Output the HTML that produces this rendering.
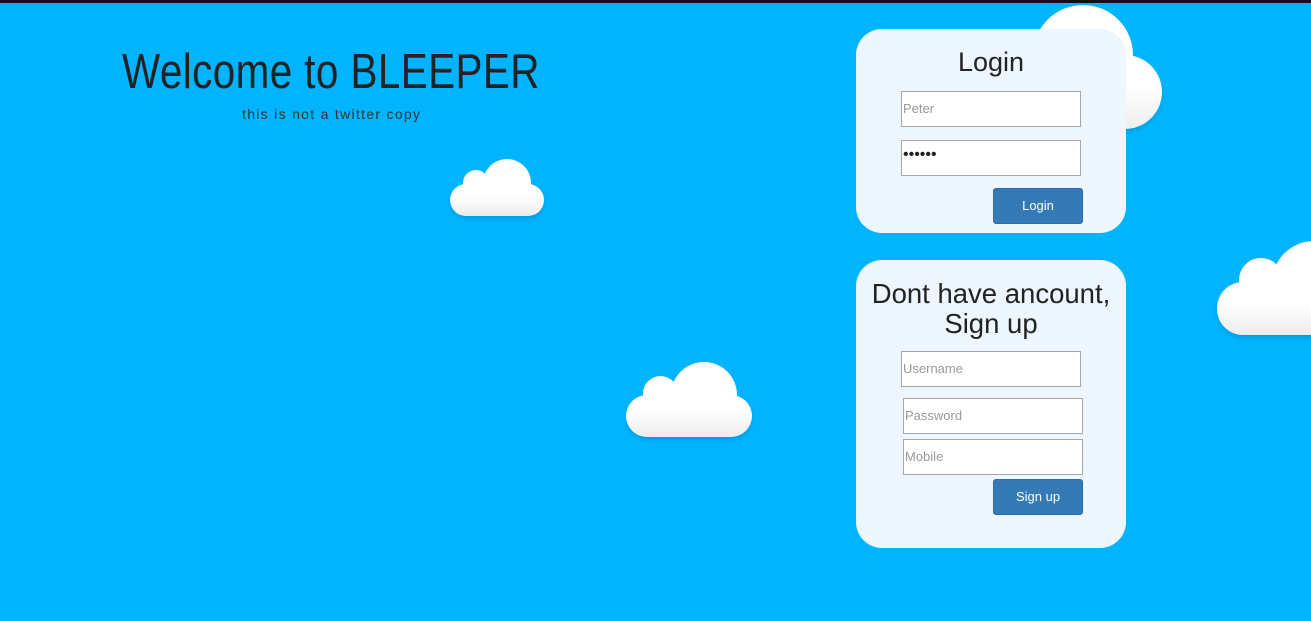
<!DOCTYPE html>
<html><head><style>
body{margin:0;width:1311px;height:621px;background:#00b4ff;overflow:hidden;position:relative;font-family:"Liberation Sans",sans-serif;}
.top{position:absolute;left:0;top:0;width:100%;height:3px;background:#111;}
.c{position:absolute;background:linear-gradient(#fff 40%,#ececec);box-shadow:0 3px 4px rgba(0,0,0,.12);}
.r{border-radius:50%;background:#fff;box-shadow:none;}
.card{position:absolute;left:856px;width:270px;background:#eef7ff;border-radius:26px;}
h1{position:absolute;left:122px;top:44px;margin:0;font-weight:normal;font-size:49px;color:#222;letter-spacing:0.5px;white-space:nowrap;transform-origin:left;transform:scaleX(0.825);}
.sub{position:absolute;left:242px;top:106px;font-size:14px;color:#333;letter-spacing:1.3px;}
.h{position:absolute;width:100%;text-align:center;color:#222;font-size:27px;}
.in{position:absolute;width:178px;height:34px;background:#fff;border:1px solid #a6a6a6;font-size:13px;color:#999;line-height:34px;padding-left:1px;box-sizing:border-box;width:180px;height:36px;}
.btn{position:absolute;width:88px;height:34px;background:#337ab7;border:1px solid #2e6da4;border-radius:3px;color:#fff;text-align:center;line-height:34px;font-size:13px;}
</style></head><body>
<div class="top"></div>
<div class="c r" style="left:1033px;top:5px;width:100px;height:100px;"></div>
<div class="c r" style="left:1088px;top:55px;width:74px;height:74px;background:linear-gradient(#fff 40%,#eee);box-shadow:0 3px 4px rgba(0,0,0,.12)"></div>
<div class="c r" style="left:463px;top:170px;width:26px;height:26px;"></div>
<div class="c r" style="left:483px;top:159px;width:48px;height:48px;"></div>
<div class="c" style="left:450px;top:184px;width:94px;height:32px;border-radius:16px;"></div>
<div class="c r" style="left:643px;top:376px;width:35px;height:35px;"></div>
<div class="c r" style="left:671px;top:362px;width:66px;height:66px;"></div>
<div class="c" style="left:626px;top:395px;width:126px;height:42px;border-radius:21px;"></div>
<div class="c r" style="left:1239px;top:258px;width:44px;height:44px;"></div>
<div class="c r" style="left:1272px;top:241px;width:84px;height:84px;"></div>
<div class="c" style="left:1217px;top:282px;width:140px;height:53px;border-radius:26px;"></div>

<h1>Welcome to BLEEPER</h1>
<div class="sub">this is not a twitter copy</div>

<div class="card" style="top:29px;height:204px;">
  <div class="h" style="top:18px;">Login</div>
  <div class="in" style="left:45px;top:62px;">Peter</div>
  <div class="in" style="left:45px;top:111px;color:#222;font-size:16px;line-height:28px;">••••••</div>
  <div class="btn" style="left:137px;top:159px;">Login</div>
</div>
<div class="card" style="top:260px;height:288px;">
  <div class="h" style="top:19px;line-height:30px;font-size:27.5px;">Dont have ancount,<br>Sign up</div>
  <div class="in" style="left:45px;top:91px;">Username</div>
  <div class="in" style="left:47px;top:138px;">Password</div>
  <div class="in" style="left:47px;top:179px;">Mobile</div>
  <div class="btn" style="left:137px;top:219px;">Sign up</div>
</div>
</body></html>
